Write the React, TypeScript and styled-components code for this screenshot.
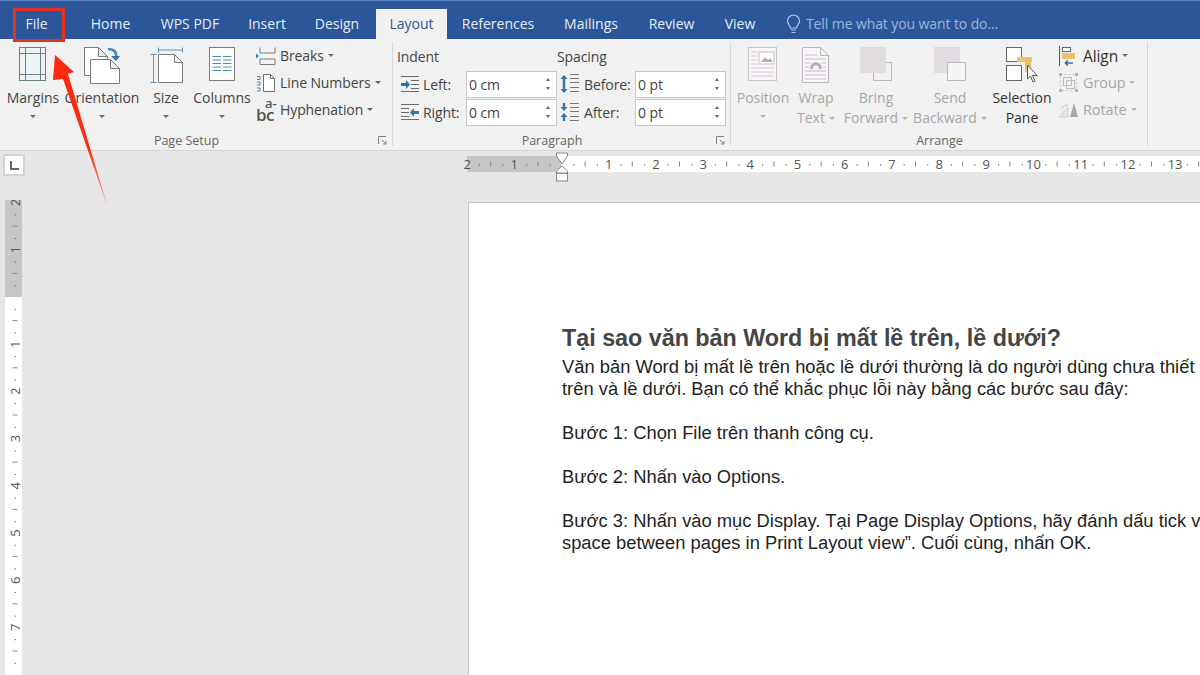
import React from 'react';
import styled, { createGlobalStyle } from 'styled-components';

const GlobalStyle = createGlobalStyle`
  html, body { margin: 0; padding: 0; background: #e6e6e6; }
  body { font-family: "Open Sans", "Noto Sans", sans-serif; overflow: hidden; }
`;

const Frame = styled.div`
  position: relative;
  width: 1200px;
  height: 675px;
  overflow: hidden;
  display: flex;
  flex-direction: column;
`;

/* title tabs */
const TabBar = styled.div`
  height: 38px;
  flex: none;
  display: flex;
  align-items: stretch;
  background: #2b579a;
  border-top: 1px solid #5b86c4;
`;

const Tab = styled.div<{ $w: number; $active?: boolean; $gap?: number }>`
  width: ${p => p.$w}px;
  margin-left: ${p => p.$gap ?? 0}px;
  margin-top: 8px;
  display: flex;
  align-items: center;
  justify-content: center;
  padding-bottom: 1px;
  white-space: nowrap;
  font-size: 14px;
  color: ${p => (p.$active ? '#2b579a' : '#e6ecf5')};
  background: ${p => (p.$active ? '#f1f1f1' : 'transparent')};
`;

const TellMe = styled.div`
  margin: 8px 0 0 16px;
  display: flex;
  align-items: center;
  gap: 5px;
  padding-bottom: 1px;
  font-size: 14px;
  letter-spacing: -0.1px;
  color: #9db4d6;
`;

/* ribbon */
const Ribbon = styled.div`
  height: 111px;
  flex: none;
  display: flex;
  background: #f1f1f1;
  border-bottom: 1px solid #d4d4d4;
  box-sizing: content-box;
`;

const Group = styled.section<{ $w: number }>`
  position: relative;
  width: ${p => p.$w}px;
  flex: none;
  display: flex;
  flex-direction: column;
  box-sizing: border-box;
  margin-top: 3px;

  &::after {
    content: "";
    position: absolute;
    right: 0;
    top: 0;
    bottom: 4px;
    width: 1px;
    background: #d8d8d8;
  }
`;

const GroupBody = styled.div`
  flex: 1;
  display: flex;
  min-height: 0;
`;

const GroupLabel = styled.div<{ $launcher?: boolean }>`
  height: 20px;
  flex: none;
  line-height: 22px;
  text-align: center;
  padding-right: ${p => (p.$launcher ? 20 : 0)}px;
  font-size: 12.5px;
  color: #666;
`;

const Launcher = styled.svg`
  position: absolute;
  right: 6px;
  bottom: 5px;
`;

const LargeButton = styled.div<{ $w: number; $off?: boolean; $dark?: boolean }>`
  width: ${p => p.$w}px;
  flex: none;
  display: flex;
  flex-direction: column;
  align-items: center;
  white-space: nowrap;
  font-size: 14px;
  line-height: 20px;
  color: ${p => (p.$off ? '#a6a6a6' : p.$dark ? '#333' : '#444')};
`;

const IconSlot = styled.div`
  height: 46px;
  flex: none;
  padding-top: 5px;
  box-sizing: border-box;
  display: flex;
  justify-content: center;
`;

const Line = styled.div<{ $caretOnly?: boolean }>`
  height: 20px;
  flex: none;
  display: flex;
  align-items: center;
  gap: 4px;
  padding-bottom: ${p => (p.$caretOnly ? 4 : 0)}px;
  box-sizing: border-box;
`;

const Caret = styled.span<{ $off?: boolean }>`
  width: 0;
  height: 0;
  border-left: 3px solid transparent;
  border-right: 3px solid transparent;
  border-top: 3px solid ${p => (p.$off ? '#b5b5b5' : '#666')};
`;

const SmallColumn = styled.div<{ $pad: number; $size?: number }>`
  display: flex;
  flex-direction: column;
  padding-left: ${p => p.$pad}px;
  font-size: ${p => p.$size ?? 14}px;
`;

const SmallRow = styled.div<{ $off?: boolean; $dark?: boolean }>`
  height: 27px;
  display: flex;
  align-items: center;
  gap: 4px;
  white-space: nowrap;
  letter-spacing: -0.1px;
  font-size: ${p => (p.$dark ? '15.5px' : 'inherit')};
  color: ${p => (p.$off ? '#a6a6a6' : p.$dark ? '#333' : '#444')};
`;

const SmallIcon = styled.span`
  width: 20px;
  height: 24px;
  display: flex;
  align-items: center;
  justify-content: center;
`;

const FieldBlock = styled.div<{ $w: number }>`
  width: ${p => p.$w}px;
  display: flex;
  flex-direction: column;
`;

const FieldTitle = styled.div<{ $pad?: number }>`
  height: 28px;
  line-height: 30px;
  padding-left: ${p => p.$pad ?? 0}px;
  font-size: 14px;
  letter-spacing: -0.1px;
  color: #444;
`;

const FieldRow = styled.div`
  height: 28px;
  display: flex;
  align-items: center;
  font-size: 14px;
  letter-spacing: -0.1px;
  color: #444;
`;

const FieldLabel = styled.span<{ $w: number; $pad: number }>`
  width: ${p => p.$w}px;
  flex: none;
  display: flex;
  align-items: center;
  gap: 4px;
  box-sizing: border-box;
  padding-left: ${p => p.$pad}px;
`;

const Spinner = styled.div`
  width: 91px;
  height: 27px;
  flex: none;
  box-sizing: border-box;
  display: flex;
  align-items: center;
  justify-content: space-between;
  padding: 0 6px 0 2px;
  background: #fff;
  border: 1px solid #c6c6c6;
  color: #444;
`;

const SpinArrows = styled.span`
  display: flex;
  flex-direction: column;
  gap: 6px;
`;

const SpinUp = styled.i`
  display: block;
  width: 0;
  height: 0;
  border-left: 2.5px solid transparent;
  border-right: 2.5px solid transparent;
  border-bottom: 3px solid #666;
`;

const SpinDown = styled(SpinUp)`
  border-bottom: 0;
  border-top: 3px solid #666;
`;

/* document area */
const Workspace = styled.div`
  flex: 1;
  min-height: 0;
  display: flex;
  background: #e6e6e6;
`;

const LeftGutter = styled.div`
  width: 468px;
  flex: none;
  display: flex;
  flex-direction: column;
  padding: 3px 0 0 3px;
  box-sizing: border-box;
`;

const CornerButton = styled.div`
  width: 22px;
  height: 22px;
  flex: none;
  box-sizing: border-box;
  display: flex;
  align-items: center;
  justify-content: center;
  background: #fff;
  border: 2px solid #d2d2d2;
`;

const CornerMark = styled.span`
  width: 7px;
  height: 7px;
  border-left: 2px solid #666;
  border-bottom: 2px solid #666;
`;

const VerticalRuler = styled.svg`
  display: block;
  margin: 24px 0 0 2px;
  flex: none;
`;

const RightPane = styled.div`
  flex: 1;
  min-width: 0;
  display: flex;
  flex-direction: column;
`;

const HorizontalRuler = styled.svg`
  display: block;
  flex: none;
  overflow: visible;
  margin: 5px 0 0 -1px;
`;

const Page = styled.main`
  flex: 1;
  margin-top: 20px;
  box-sizing: border-box;
  padding: 121px 0 0 93px;
  background: #fff;
  border-top: 1px solid #c6c6c6;
  border-left: 1px solid #c6c6c6;
  overflow: hidden;
  font-family: "Liberation Sans", Arial, sans-serif;
  white-space: nowrap;
`;

const Heading = styled.h1`
  margin: 0 0 4px;
  font-size: 23.3px;
  line-height: 28px;
  font-weight: 700;
  color: #454545;
`;

const Paragraph = styled.p`
  margin: 0 0 22px;
  font-size: 18.35px;
  line-height: 22px;
  color: #1f1f1f;
`;

/* overlays */
const FileHighlight = styled.div`
  position: absolute;
  left: 13px;
  top: 8px;
  width: 52px;
  height: 34px;
  box-sizing: border-box;
  border: 3px solid #e5321e;
`;

const Arrow = styled.svg`
  position: absolute;
  left: 0;
  top: 0;
`;

const stroke = '#6b7f86';

const MarginsIcon = () => (
  <svg width="28" height="34" viewBox="0 0 28 34">
    <rect x="7" y="7" width="14" height="20" fill="#e8f4f8" />
    <rect x="0.5" y="0.5" width="26" height="33" fill="none" stroke={stroke} />
    <path d="M6.500 0v34M21.500 0v34M0 6.500h27M0 27.500h27" stroke={stroke} fill="none" />
  </svg>
);

const Sheet = ({ x, y, w, h }: { x: number; y: number; w: number; h: number }) => (
  <path d={`M${x + .5} ${y + .5}h${w - 9}l9 9v${h - 9}h-${w}z M${x + w - 9 + .5} ${y + .5}v9h9`} fill="#fff" stroke="#7a7a7a" />
);

const OrientationIcon = () => (
  <svg width="38" height="38" viewBox="0 0 38 38">
    <Sheet x={1} y={0} w={23} h={28} />
    <Sheet x={7} y={12} w={29} h={24} />
    <path d="M25 2c6 0 9 3 8 9" fill="none" stroke="#4a86b8" strokeWidth="2.6" />
    <path d="M28 9l5 5 4-5z" fill="#2f75ad" />
  </svg>
);

const SizeIcon = () => (
  <svg width="33" height="37" viewBox="0 0 33 37">
    <path d="M8.500 .5v5M32.500 .5v5M8.500 3h24M.5 7.500h6M.5 35.500h6M3.500 7.500v28" stroke="#5f93ba" fill="none" />
    <path d="M8.500 7.500h16l8 8v20h-24z M24.500 7.500v8h8" fill="#fff" stroke="#7a7a7a" />
  </svg>
);

const ColumnsIcon = () => (
  <svg width="27" height="35" viewBox="0 0 27 35">
    <rect x="0.500" y="0.500" width="25" height="33" fill="#fff" stroke="#7a7a7a" />
    <path d="M3.500 9.500h8.500M3.500 13h8.500M3.500 16.500h8.500M3.500 20h8.500M3.500 23.500h8.500M14 9.500h8.500M14 13h8.500M14 16.500h8.500M14 20h8.500M14 23.500h8.500" stroke="#4d8bab" />
  </svg>
);

const BreaksIcon = () => (
  <svg width="20" height="18" viewBox="0 0 20 18">
    <path d="M4 .5v5.500h15V.5M4 17.500v-5.500h15v5.500M4 17.500h15" stroke="#7a7a7a" fill="none" />
    <path d="M0 6.500l3 2.500-3 2.500z" fill="#3a78a8" />
  </svg>
);

const LineNumbersIcon = () => (
  <svg width="20" height="18" viewBox="0 0 20 18">
    <path d="M7.500 .5h7l4 4v13h-11z M14.500 .5v4h4" fill="#fff" stroke="#6f6f6f" />
    <path d="M1 2.500h3M4 2.500v3h-3M1 8h3v3h-3M1 14h3v3h-3" stroke="#3a78a8" fill="none" strokeWidth="0.900" />
  </svg>
);

const HyphenIcon = styled.span`
  position: relative;
  width: 20px;
  height: 22px;
  flex: none;
`;

const HyphenBase = styled.span`
  position: absolute;
  left: 0;
  bottom: 0;
  font-size: 17px;
  line-height: 12px;
  font-weight: 600;
  letter-spacing: -0.5px;
  color: #555;
`;

const HyphenSup = styled.span`
  position: absolute;
  left: 9px;
  top: 0;
  font-size: 13px;
  line-height: 9px;
  font-weight: 600;
  color: #555;
`;

const IndentLeftIcon = () => (
  <svg width="18" height="16" viewBox="0 0 18 16">
    <path d="M0 .5h18M10 4.500h8M10 8.500h8M10 12.500h8M0 15.500h18" stroke="#6b6b6b" fill="none" />
    <path d="M0 7h5V4l4 4.500-4 4.500v-3H0z" fill="#2f75ad" />
  </svg>
);

const IndentRightIcon = () => (
  <svg width="18" height="16" viewBox="0 0 18 16">
    <path d="M0 .5h18M0 4.500h8M0 8.500h8M0 12.500h8M0 15.500h18" stroke="#6b6b6b" fill="none" />
    <path d="M18 7h-5V4L9 8.500l4 4.500v-3h5z" fill="#2f75ad" />
  </svg>
);

const SpaceBeforeIcon = () => (
  <svg width="20" height="20" viewBox="0 0 20 20">
    <path d="M4 1l3.500 4H5.200v10H7.500L4 19 .5 15h2.300V5H.5z" fill="#2f75ad" />
    <path d="M10 .5h9M10 4.500h9M10 8.500h9M10 13.500h9M10 17.500h9" stroke="#777" fill="none" />
  </svg>
);

const SpaceAfterIcon = () => (
  <svg width="20" height="20" viewBox="0 0 20 20">
    <path d="M2.800 1h2.400v4h2.300L4 9 .5 5h2.300zM4 11l3.500 4H5.200v4H2.800v-4H.5z" fill="#2f75ad" />
    <path d="M10 1.500h9M10 5.500h9M10 9.500h9M10 14.500h9M10 18.500h9" stroke="#777" fill="none" />
  </svg>
);

const PositionIcon = () => (
  <svg width="30" height="35" viewBox="0 0 30 35">
    <rect x="0.500" y="0.500" width="28" height="33" fill="#f7f5f7" stroke="#c8bfc8" />
    <path d="M3 5h6M3 9h6M3 13h6M3 17h6M3 21h23M3 25h23M3 29h23" stroke="#d0c8d0" />
    <rect x="11" y="5" width="15" height="12" fill="#fff" stroke="#c8bfc8" />
    <path d="M13 15l4-5 3 3 2-2 3 4z" fill="#b5adb5" />
  </svg>
);

const WrapIcon = () => (
  <svg width="28" height="37" viewBox="0 0 28 37">
    <path d="M.500 .5h18l8 8v27h-26z M18.500 .5v8h8" fill="#f7f5f7" stroke="#bdb5bd" />
    <path d="M3 8h12M3 12h21M3 16h6M19 16h5M3 20h4M21 20h3M3 24h21M3 28h21M3 32h21" stroke="#c5bdc5" />
    <path d="M8 22c0-9 12-9 12 0h-3c0-5-6-5-6 0z" fill="#b5adb5" />
  </svg>
);

const BringIcon = () => (
  <svg width="33" height="35" viewBox="0 0 33 35">
    <rect x="13.500" y="15.500" width="18" height="18" fill="#f1f1f1" stroke="#bdb5bd" />
    <rect x="0" y="0" width="26" height="26" fill="#e0dce0" />
  </svg>
);

const SendIcon = () => (
  <svg width="33" height="35" viewBox="0 0 33 35">
    <rect x="0" y="0" width="26" height="26" fill="#e0dce0" />
    <rect x="13.500" y="15.500" width="18" height="18" fill="#f6f4f6" stroke="#bdb5bd" />
  </svg>
);

const SelectionIcon = () => (
  <svg width="32" height="37" viewBox="0 0 32 37">
    <rect x="0.500" y="0.500" width="15" height="14" fill="#fff" stroke="#666" />
    <rect x="0.500" y="18.500" width="15" height="15" fill="#fff" stroke="#666" />
    <path d="M11 10h15v5h-1v10h-6V15h-8z" fill="#eec16d" />
    <path d="M21.500 18v14l3-3 2.500 6 2-1-2.500-5.500h4.500z" fill="#fff" stroke="#555" />
  </svg>
);

const AlignIcon = () => (
  <svg width="20" height="20" viewBox="0 0 20 20">
    <path d="M.5 0v20" stroke="#555" />
    <rect x="3.500" y="1.500" width="8" height="4" fill="#fff" stroke="#666" />
    <rect x="3" y="7" width="13" height="6" fill="#eec16d" />
    <path d="M14 17H6M6 17l3-2.500M6 17l3 2.500" stroke="#2f75ad" strokeWidth="1.500" fill="none" />
  </svg>
);

const GroupIcon = () => (
  <svg width="20" height="20" viewBox="0 0 20 20">
    <path d="M1.500 1.500h16v16h-16z" fill="none" stroke="#c2c2c2" strokeDasharray="2 2" />
    <rect x="4.500" y="4.500" width="8" height="8" fill="none" stroke="#bdbdbd" />
    <rect x="7.500" y="7.500" width="8" height="8" fill="none" stroke="#bdbdbd" />
    <path d="M0 0h3v3H0zM16 0h3v3h-3zM0 16h3v3H0zM16 16h3v3h-3z" fill="#b5b5b5" />
  </svg>
);

const RotateIcon = () => (
  <svg width="20" height="16" viewBox="0 0 20 16">
    <path d="M0 15L9 5v10z" fill="#e4e4e4" stroke="#cfcfcf" />
    <path d="M11 15L15 1l4 14z" fill="#a9a9a9" />
    <path d="M3 7c1-3 3-4 6-4" stroke="#c2c2c2" fill="none" />
  </svg>
);

const LauncherIcon = () => (
  <Launcher width="9" height="9" viewBox="0 0 9 9">
    <path d="M.5 8V.5H8M4 4l4 4M8 5v3H5" stroke="#808080" fill="none" />
  </Launcher>
);

const BulbIcon = () => (
  <svg width="15" height="20" viewBox="0 0 15 20">
    <path d="M7.500 1a6 6 0 0 1 6 6c0 3-2.500 4-3 7h-6c-.5-3-3-4-3-7a6 6 0 0 1 6-6z" fill="none" stroke="#b7c9e3" strokeWidth="1.200" />
    <path d="M5 16h5M5.500 18.500h4" stroke="#b7c9e3" strokeWidth="1.200" />
  </svg>
);

const RULER_STEP = 47.2;

const HRulerDrawing = () => {
  const zero = 94.5;
  const marks: React.ReactNode[] = [];
  for (let q = -8; q <= 54; q++) {
    const x = zero + (q * RULER_STEP) / 4;
    if (q % 4 === 0) {
      if (q !== 0) {
        marks.push(<text key={q} x={x} y={12.500} textAnchor="middle" fontSize="13" fill="#555" fontFamily="Open Sans">{Math.abs(q / 4)}</text>);
      }
    } else if (q % 2 === 0) {
      marks.push(<path key={q} d={`M${x} 5.500v5`} stroke="#888" />);
    } else {
      marks.push(<rect key={q} x={x} y={8} width="1" height="1.500" fill="#777" />);
    }
  }
  return (
    <HorizontalRuler width="733" height="26" viewBox="0 0 733 26">
      <rect x="0" y="0" width="733" height="16" fill="#fff" />
      <rect x="0" y="0" width="94" height="16" fill="#c6c6c6" />
      {marks}
      <path d="M89.500 -3h11v3l-5.500 8-5.500-8zM95 10l5.500 5v2h-11v-2z" fill="#fff" stroke="#8a8a8a" />
      <rect x="89.500" y="17.500" width="11" height="7.500" fill="#fff" stroke="#8a8a8a" />
    </HorizontalRuler>
  );
};

const VRulerDrawing = () => {
  const zero = 97;
  const marks: React.ReactNode[] = [];
  for (let q = -8; q <= 31; q++) {
    const y = zero + (q * RULER_STEP) / 4;
    if (q % 4 === 0) {
      if (q !== 0) {
        marks.push(
          <text key={q} x={0} y={0} transform={`translate(14.500 ${y}) rotate(-90)`} textAnchor="middle" fontSize="13" fill="#555" fontFamily="Open Sans">
            {Math.abs(q / 4)}
          </text>
        );
      }
    } else if (q % 2 === 0) {
      marks.push(<path key={q} d={`M7.500 ${y}h5`} stroke="#888" />);
    } else {
      marks.push(<rect key={q} x={9.500} y={y} width="1.500" height="1" fill="#777" />);
    }
  }
  return (
    <VerticalRuler width="17" height="476" viewBox="0 0 17 476">
      <rect x="0" y="0" width="17" height="476" fill="#fff" />
      <rect x="0" y="0" width="17" height="97" fill="#c6c6c6" />
      {marks}
    </VerticalRuler>
  );
};

const Spin = ({ value }: { value: string }) => (
  <Spinner>
    <span>{value}</span>
    <SpinArrows><SpinUp /><SpinDown /></SpinArrows>
  </Spinner>
);

const Large = ({ w, icon, lines, off, caretLine }: { w: number; icon: React.ReactNode; lines: string[]; off?: boolean; caretLine?: boolean }) => (
  <LargeButton $w={w} $off={off}>
    <IconSlot>{icon}</IconSlot>
    {lines.map((l, i) => (
      <Line key={l}>
        {l}
        {caretLine && i === lines.length - 1 && <Caret $off={off} />}
      </Line>
    ))}
    {!caretLine && <Line $caretOnly><Caret $off={off} /></Line>}
  </LargeButton>
);

const tabs = [
  { label: 'File', w: 73 },
  { label: 'Home', w: 75 },
  { label: 'WPS PDF', w: 84 },
  { label: 'Insert', w: 70 },
  { label: 'Design', w: 70 },
  { label: 'Layout', w: 71, gap: 4, active: true },
  { label: 'References', w: 102 },
  { label: 'Mailings', w: 84 },
  { label: 'Review', w: 77 },
  { label: 'View', w: 60 },
];

export default function App() {
  return (
    <Frame>
      <GlobalStyle />
      <TabBar>
        {tabs.map(t => (
          <Tab key={t.label} $w={t.w} $gap={t.gap} $active={t.active}>{t.label}</Tab>
        ))}
        <TellMe><BulbIcon />Tell me what you want to do...</TellMe>
      </TabBar>

      <Ribbon>
        <Group $w={393}>
          <GroupBody>
            <Large w={66} icon={<MarginsIcon />} lines={['Margins']} />
            <Large w={72} icon={<OrientationIcon />} lines={['Orientation']} />
            <Large w={56} icon={<SizeIcon />} lines={['Size']} />
            <Large w={56} icon={<ColumnsIcon />} lines={['Columns']} />
            <SmallColumn $pad={6}>
              <SmallRow><SmallIcon><BreaksIcon /></SmallIcon>Breaks<Caret /></SmallRow>
              <SmallRow><SmallIcon><LineNumbersIcon /></SmallIcon>Line Numbers<Caret /></SmallRow>
              <SmallRow><SmallIcon><HyphenIcon><HyphenBase>bc</HyphenBase><HyphenSup>a-</HyphenSup></HyphenIcon></SmallIcon>Hyphenation<Caret /></SmallRow>
            </SmallColumn>
          </GroupBody>
          <GroupLabel $launcher>Page Setup</GroupLabel>
          <LauncherIcon />
        </Group>

        <Group $w={338}>
          <GroupBody>
            <FieldBlock $w={164}>
              <FieldTitle $pad={4}>Indent</FieldTitle>
              <FieldRow>
                <FieldLabel $w={73} $pad={8}><IndentLeftIcon />Left:</FieldLabel>
                <Spin value="0 cm" />
              </FieldRow>
              <FieldRow>
                <FieldLabel $w={73} $pad={8}><IndentRightIcon />Right:</FieldLabel>
                <Spin value="0 cm" />
              </FieldRow>
            </FieldBlock>
            <FieldBlock $w={174}>
              <FieldTitle>Spacing</FieldTitle>
              <FieldRow>
                <FieldLabel $w={78} $pad={3}><SpaceBeforeIcon />Before:</FieldLabel>
                <Spin value="0 pt" />
              </FieldRow>
              <FieldRow>
                <FieldLabel $w={78} $pad={3}><SpaceAfterIcon />After:</FieldLabel>
                <Spin value="0 pt" />
              </FieldRow>
            </FieldBlock>
          </GroupBody>
          <GroupLabel $launcher>Paragraph</GroupLabel>
          <LauncherIcon />
        </Group>

        <Group $w={417}>
          <GroupBody>
            <Large w={64} off icon={<PositionIcon />} lines={['Position']} />
            <Large w={42} off caretLine icon={<WrapIcon />} lines={['Wrap', 'Text']} />
            <Large w={78} off caretLine icon={<BringIcon />} lines={['Bring', 'Forward']} />
            <Large w={70} off caretLine icon={<SendIcon />} lines={['Send', 'Backward']} />
            <LargeButton $w={74} $dark>
              <IconSlot><SelectionIcon /></IconSlot>
              <Line>Selection</Line>
              <Line>Pane</Line>
            </LargeButton>
            <SmallColumn $pad={0} $size={14.5}>
              <SmallRow $dark><SmallIcon><AlignIcon /></SmallIcon>Align<Caret /></SmallRow>
              <SmallRow $off><SmallIcon><GroupIcon /></SmallIcon>Group<Caret $off /></SmallRow>
              <SmallRow $off><SmallIcon><RotateIcon /></SmallIcon>Rotate<Caret $off /></SmallRow>
            </SmallColumn>
          </GroupBody>
          <GroupLabel>Arrange</GroupLabel>
        </Group>
      </Ribbon>

      <Workspace>
        <LeftGutter>
          <CornerButton><CornerMark /></CornerButton>
          <VRulerDrawing />
        </LeftGutter>
        <RightPane>
          <HRulerDrawing />
          <Page>
            <Heading>Tại sao văn bản Word bị mất lề trên, lề dưới?</Heading>
            <Paragraph>
              Văn bản Word bị mất lề trên hoặc lề dưới thường là do người dùng chưa thiết<br />
              trên và lề dưới. Bạn có thể khắc phục lỗi này bằng các bước sau đây:
            </Paragraph>
            <Paragraph>Bước 1: Chọn File trên thanh công cụ.</Paragraph>
            <Paragraph>Bước 2: Nhấn vào Options.</Paragraph>
            <Paragraph>
              Bước 3: Nhấn vào mục Display. Tại Page Display Options, hãy đánh dấu tick v<br />
              space between pages in Print Layout view”. Cuối cùng, nhấn OK.
            </Paragraph>
          </Page>
        </RightPane>
      </Workspace>

      <FileHighlight />
      <Arrow width="120" height="215" viewBox="0 0 120 215">
        <defs>
          <linearGradient id="arrowFade" x1="0" y1="0" x2="0" y2="1">
            <stop offset="0.6" stopColor="#fb2a10" />
            <stop offset="1" stopColor="#f9a08f" />
          </linearGradient>
        </defs>
        <polygon points="55,55 74,72 68,74 108,208 63,79 53,80" fill="url(#arrowFade)" />
      </Arrow>
    </Frame>
  );
}
